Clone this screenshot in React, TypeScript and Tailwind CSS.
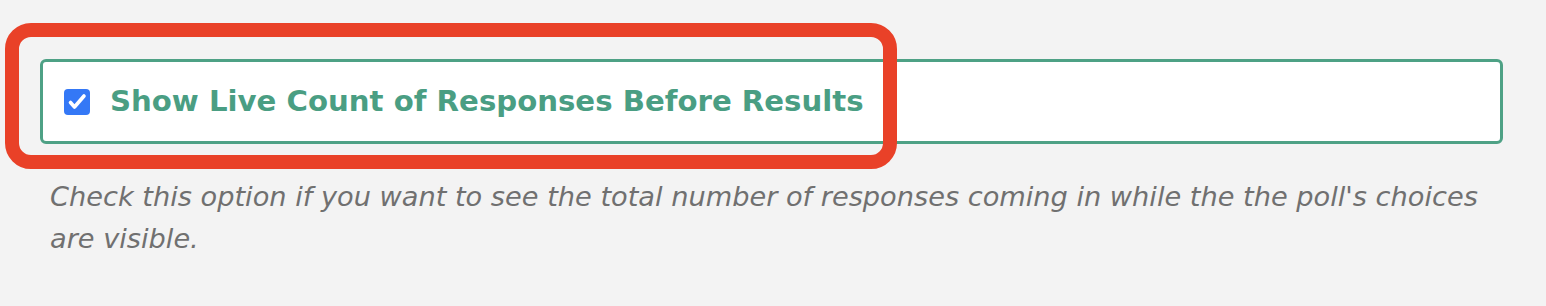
import React from 'react';

const App: React.FC = () => {
  return (
    <div className="min-h-[306px] w-full bg-[#f3f3f3] font-['DejaVu_Sans',sans-serif]">
      <div className="relative px-[40px] pt-[59px]">
        {/* annotation */}
        <div className="pointer-events-none absolute left-[5px] top-[23px] h-[146px] w-[892px] rounded-[26px] border-[14px] border-[#e94128]" />
        <label className="flex h-[85px] w-[1463px] items-center gap-[20px] rounded-[6px] border-[3px] border-[#4ea185] bg-white pl-[21px]">
          <span className="block h-[26px] w-[26px] rounded-[4px] bg-[#3478f6]">
            <svg width="26" height="26" viewBox="0 0 26 26" fill="none" stroke="white" strokeWidth="3.6" strokeLinecap="round" strokeLinejoin="round">
              <path d="M6.5 13.5l4 4.5L20 7" />
            </svg>
          </span>
          <span className="text-[29.2px] font-bold text-[#4a9e83]">Show Live Count of Responses Before Results</span>
        </label>
        <p className="mt-[32px] w-[1450px] pl-[10px] text-[27.2px] leading-[42px] italic text-[#707070]">
          Check this option if you want to see the total number of responses coming in while the the poll's choices are visible.
        </p>
      </div>
    </div>
  );
};

export default App;
